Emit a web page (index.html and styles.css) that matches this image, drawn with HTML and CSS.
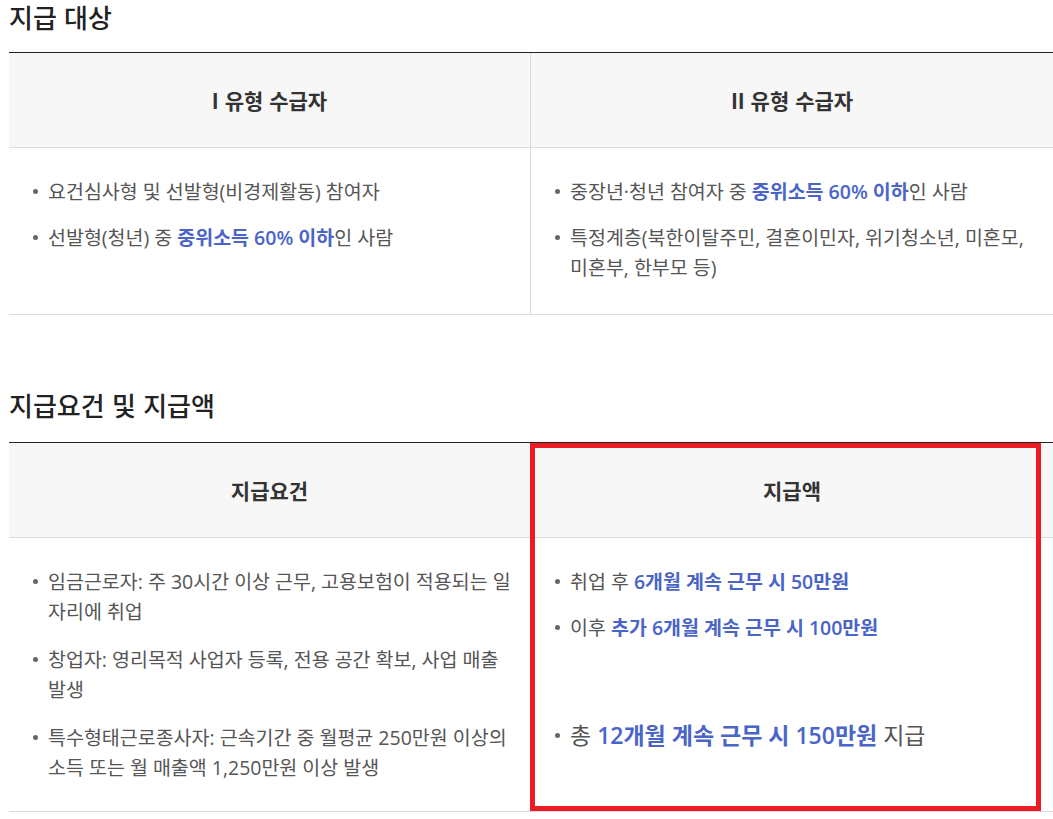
FILE: index.html
```html
<!DOCTYPE html>
<html lang="ko">
<head>
<meta charset="utf-8">
<link rel="stylesheet" href="styles.css">
</head>
<body>
<section class="block">
  <h2 class="title">지급 대상</h2>
  <div class="table">
    <div class="th">I 유형 수급자</div>
    <div class="th">II 유형 수급자</div>
    <div class="td">
      <ul>
        <li>요건심사형 및 선발형(비경제활동) 참여자</li>
        <li>선발형(청년) 중 <b class="hl">중위소득 60% 이하</b>인 사람</li>
      </ul>
    </div>
    <div class="td">
      <ul>
        <li>중장년·청년 참여자 중 <b class="hl">중위소득 60% 이하</b>인 사람</li>
        <li>특정계층(북한이탈주민, 결혼이민자, 위기청소년, 미혼모, 미혼부, 한부모 등)</li>
      </ul>
    </div>
  </div>
</section>

<section class="block second">
  <h2 class="title">지급요건 및 지급액</h2>
  <div class="table">
    <div class="th">지급요건</div>
    <div class="th">지급액</div>
    <div class="td">
      <ul class="wide">
        <li>임금근로자: 주 30시간 이상 근무, 고용보험이 적용되는 일자리에 취업</li>
        <li>창업자: 영리목적 사업자 등록, 전용 공간 확보, 사업 매출 발생</li>
        <li>특수형태근로종사자: 근속기간 중 월평균 250만원 이상의 소득 또는 월 매출액 1,250만원 이상 발생</li>
      </ul>
    </div>
    <div class="td">
      <ul>
        <li>취업 후 <b class="hl">6개월 계속 근무 시 50만원</b></li>
        <li>이후 <b class="hl">추가 6개월 계속 근무 시 100만원</b></li>
        <li class="total">총 <b class="hl">12개월 계속 근무 시 150만원</b> 지급</li>
      </ul>
    </div>
    <div class="mark"></div>
  </div>
</section>
</body>
</html>
```

FILE: styles.css
```css
* { box-sizing: border-box; }

html, body {
  margin: 0;
  padding: 0;
  background: #fff;
}

body {
  padding-left: 9px;
  font-family: "Open Sans", "Noto Sans CJK KR", sans-serif;
  color: #555;
}

.title {
  margin: 0 0 18px;
  font-family: "Noto Sans CJK KR", sans-serif;
  font-size: 26px;
  line-height: 34px;
  font-weight: 500;
  color: #222;
}

.second {
  margin-top: 73px;
}

.second .title {
  margin-bottom: 20px;
}

.table {
  position: relative;
  display: grid;
  grid-template-columns: 1fr 1fr;
  border-top: 1px solid #222;
  border-bottom: 1px solid #dcdcdc;
}

.th {
  background: #f7f7f7;
  padding: 33px 0;
  line-height: 28px;
  text-align: center;
  font-family: "Noto Sans CJK KR", sans-serif;
  font-size: 21px;
  font-weight: 700;
  color: #333;
  border-bottom: 1px solid #dcdcdc;
}

.th:first-child,
.td:nth-child(3) {
  border-right: 1px solid #dcdcdc;
}

.td {
  padding: 29px 12px 31px 24px;
  word-break: break-all;
}

.second .td {
  padding-bottom: 28px;
}

ul {
  margin: 0;
  padding: 0;
  list-style: none;
}

li {
  padding-left: 15px;
  font-size: 19.5px;
  line-height: 30px;
  margin-bottom: 16px;
}

.wide li {
  margin-bottom: 18px;
}

li:last-child {
  margin-bottom: 0;
}

li::before {
  content: "";
  display: inline-block;
  width: 5px;
  height: 5px;
  border-radius: 50%;
  background: #666;
  margin-left: -15px;
  margin-right: 10px;
  vertical-align: middle;
  position: relative;
  top: -2px;
}

.hl {
  color: #4a64c8;
  font-weight: 600;
}

li.total {
  margin-top: 76px;
  font-size: 23px;
  line-height: 32px;
}

.mark {
  position: absolute;
  left: 521px;
  top: 0;
  width: 511px;
  bottom: 0;
  border: 5px solid #ed1c24;
  pointer-events: none;
}
```
